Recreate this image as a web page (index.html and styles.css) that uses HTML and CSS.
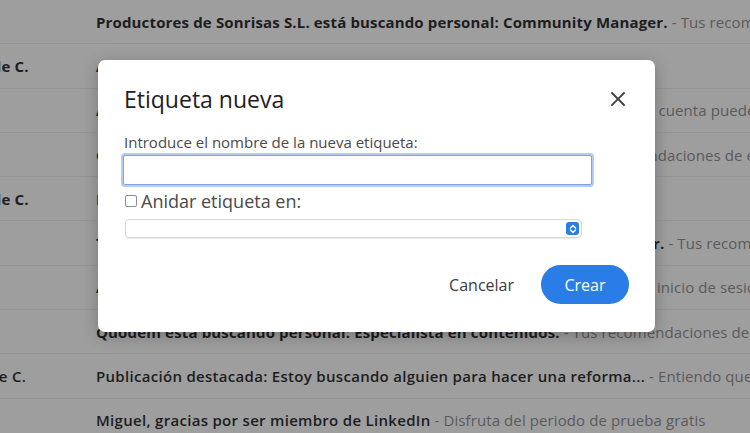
FILE: index.html
```html
<!DOCTYPE html>
<html lang="es">
<head>
    <meta charset="UTF-8">
    <meta name="viewport" content="width=device-width, initial-scale=1.0">
    <title>Etiqueta nueva</title>
    <link rel="stylesheet" href="styles.css">
</head>
<body>
    <!-- INBOX BEHIND THE MODAL -->
    <main class="inbox">
        <div class="row row--unread">
            <span class="row__from">LinkedIn</span>
            <span class="row__subject">Productores de Sonrisas S.L. está buscando personal: Community Manager.</span>
            <span class="row__snippet">&nbsp;- Tus recomendaciones de empleo</span>
        </div>
        <div class="row row--unread">
            <span class="row__from">Ayuntamiento de C.</span>
            <span class="row__subject">Aviso de cita previa confirmada</span>
            <span class="row__snippet">&nbsp;- Su cita ha quedado registrada</span>
        </div>
        <div class="row row--unread">
            <span class="row__from">Google</span>
            <span class="row__subject">Alerta de seguridad</span>
            <span class="row__snippet">&nbsp;- Hemos detectado un acceso nuevo desde un equipo. Tu cuenta puede estar en riesgo</span>
        </div>
        <div class="row row--unread">
            <span class="row__from">LinkedIn</span>
            <span class="row__subject">Grupo Norte Digital S.A. está buscando personal: Redactora.</span>
            <span class="row__snippet">&nbsp;- Tus recomendaciones de empleo</span>
        </div>
        <div class="row row--unread">
            <span class="row__from">Ayuntamiento de C.</span>
            <span class="row__subject">Recordatorio de pago de tasas</span>
            <span class="row__snippet">&nbsp;- Plazo hasta el día 30</span>
        </div>
        <div class="row row--unread">
            <span class="row__from">LinkedIn</span>
            <span class="row__subject">Talento Digital Consultores está buscando personal: Redactora SEO Senior.</span>
            <span class="row__snippet">&nbsp;- Tus recomendaciones de empleo</span>
        </div>
        <div class="row row--unread">
            <span class="row__from">Google</span>
            <span class="row__subject">Alerta de seguridad</span>
            <span class="row__snippet">&nbsp;- Hemos detectado un dispositivo nuevo que ha usado tu inicio de sesión</span>
        </div>
        <div class="row row--unread">
            <span class="row__from">LinkedIn</span>
            <span class="row__subject">Quodem está buscando personal: Especialista en contenidos.</span>
            <span class="row__snippet">&nbsp;- Tus recomendaciones de empleo</span>
        </div>
        <div class="row">
            <span class="row__from">Ayuntamiento de C.</span>
            <span class="row__subject">Publicación destacada: Estoy buscando alguien para hacer una reforma...</span>
            <span class="row__snippet">&nbsp;- Entiendo que</span>
        </div>
        <div class="row">
            <span class="row__from">LinkedIn</span>
            <span class="row__subject">Miguel, gracias por ser miembro de LinkedIn</span>
            <span class="row__snippet">&nbsp;- Disfruta del periodo de prueba gratis</span>
        </div>
    </main>

    <!-- NEW LABEL DIALOG -->
    <div class="dialog" role="dialog" aria-labelledby="dialog-title">
        <div class="dialog__head">
            <h1 class="dialog__title" id="dialog-title">Etiqueta nueva</h1>
            <button class="dialog__close" aria-label="Cerrar">
                <svg width="16" height="16" viewBox="0 0 16 16">
                    <path d="M2 2 L14 14 M14 2 L2 14" stroke="#3c4043" stroke-width="1.8" stroke-linecap="square"/>
                </svg>
            </button>
        </div>

        <label class="dialog__label" for="label-name">Introduce el nombre de la nueva etiqueta:</label>
        <input class="dialog__input" id="label-name" type="text">

        <label class="nest">
            <span class="nest__box"></span>
            Anidar etiqueta en:
        </label>
        <div class="select">
            <span class="select__arrows">
                <svg width="8" height="10" viewBox="0 0 8 10">
                    <path d="M1.5 4 L4 1.5 L6.5 4 M1.5 6 L4 8.5 L6.5 6" fill="none" stroke="#fff" stroke-width="1.4" stroke-linecap="round" stroke-linejoin="round"/>
                </svg>
            </span>
        </div>

        <div class="dialog__actions">
            <button class="btn btn--text">Cancelar</button>
            <button class="btn btn--primary">Crear</button>
        </div>
    </div>
</body>
</html>
```

FILE: styles.css
```css
:root {
    --dim-bg: #9e9e9f;
    --dim-line: #959596;
    --dim-text: #1d1d1e;
    --dim-muted: #5a5a5b;
    --blue: #2a7de6;
}

* {
    box-sizing: border-box;
}

body {
    margin: 0;
    height: 433px;
    overflow: hidden;
    background-color: var(--dim-bg);
    font-family: "Open Sans", Roboto, sans-serif;
}

/* inbox (already dimmed by the modal backdrop) */
.inbox {
    margin-left: -122px;
}
.row {
    display: flex;
    align-items: center;
    height: 44.3px;
    border-bottom: 1px solid var(--dim-line);
    white-space: nowrap;
    font-size: 15px;
    letter-spacing: 0.3px;
    color: var(--dim-text);
    font-weight: 600;
}
.row--unread {
    font-weight: 700;
    letter-spacing: 0.15px;
}
.row__from {
    flex: 0 0 218px;
    overflow: hidden;
}
.row__snippet {
    font-weight: 400;
    letter-spacing: 0.1px;
    color: var(--dim-muted);
}

/* dialog */
.dialog {
    position: absolute;
    left: 98px;
    top: 60px;
    width: 557px;
    height: 272px;
    padding: 23px 26px 0 26px;
    background-color: white;
    border-radius: 7px;
    box-shadow: 0 4px 16px rgba(0, 0, 0, 0.25);
}
.dialog__head {
    display: flex;
    justify-content: space-between;
    align-items: center;
}
.dialog__title {
    margin: 0;
    font-size: 23px;
    line-height: 32px;
    font-weight: 400;
    color: #202124;
}
.dialog__close {
    display: flex;
    padding: 0;
    margin-right: 3px;
    border: 0;
    background: transparent;
    cursor: pointer;
}
.dialog__label {
    display: block;
    margin-top: 17px;
    font-size: 15px;
    line-height: 20px;
    color: #4a4a4a;
}
.dialog__input {
    display: block;
    width: 469px;
    height: 30px;
    margin: 3px 0 0 -1px;
    border: 1px solid #7ea5dc;
    border-radius: 2px;
    box-shadow: 0 0 0 2px #b3cdf0;
    outline: 0;
    font-size: 14px;
}

.nest {
    display: flex;
    align-items: center;
    gap: 4px;
    margin-top: 6px;
    font-size: 18px;
    line-height: 20px;
    color: #4a4a4a;
}
.nest__box {
    width: 12px;
    height: 12px;
    margin-left: 1px;
    border: 1px solid #8c8c8c;
    border-radius: 2px;
}

.select {
    display: flex;
    justify-content: flex-end;
    align-items: center;
    width: 457px;
    height: 19px;
    margin: 8px 0 0 1px;
    padding-right: 2px;
    border: 1px solid #d6d6d6;
    border-radius: 4px;
    box-shadow: 0 1px 1px rgba(0, 0, 0, 0.08);
}
.select__arrows {
    display: flex;
    align-items: center;
    justify-content: center;
    width: 13px;
    height: 13px;
    border-radius: 3px;
    background-color: var(--blue);
}

.dialog__actions {
    display: flex;
    justify-content: flex-end;
    align-items: center;
    gap: 27px;
    margin-top: 27px;
}
.btn {
    border: 0;
    padding: 0;
    font-family: "Open Sans", Roboto, sans-serif;
    font-size: 16px;
    cursor: pointer;
}
.btn--text {
    background: transparent;
    color: #3c3c3c;
}
.btn--primary {
    width: 88px;
    height: 39px;
    border-radius: 20px;
    background-color: var(--blue);
    color: white;
    font-weight: 500;
}
```
